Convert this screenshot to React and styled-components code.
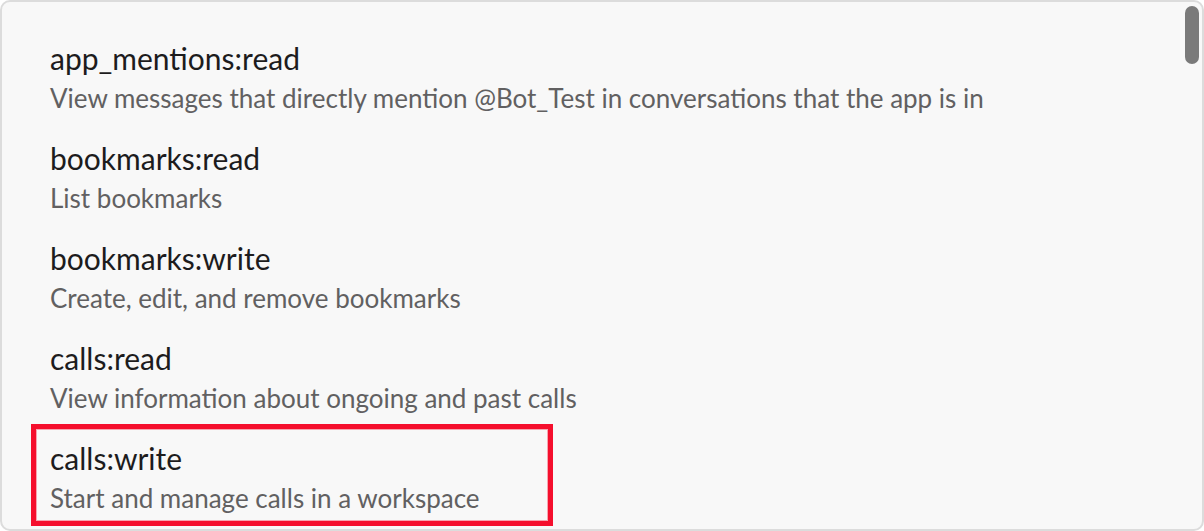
import React from 'react'
import styled, { createGlobalStyle } from 'styled-components'

const GlobalStyle = createGlobalStyle`
    html, body {
        margin: 0;
        padding: 0;
        background: #ffffff;
    }
    body {
        font-family: Lato, "Noto Sans", sans-serif;
    }
`;

const scopes = [
    { name: 'app_mentions:read', text: 'View messages that directly mention @Bot_Test in conversations that the app is in' },
    { name: 'bookmarks:read', text: 'List bookmarks' },
    { name: 'bookmarks:write', text: 'Create, edit, and remove bookmarks' },
    { name: 'calls:read', text: 'View information about ongoing and past calls' },
    { name: 'calls:write', text: 'Start and manage calls in a workspace', highlight: true },
];

function App() {
    return (
        <>
            <GlobalStyle />
            <Card>
                <ScopeList>
                    {scopes.map((s) => (
                        <Scope key={s.name} $highlight={s.highlight}>
                            <ScopeName>{s.name}</ScopeName>
                            <ScopeText>{s.text}</ScopeText>
                        </Scope>
                    ))}
                </ScopeList>
                <Thumb />
            </Card>
        </>
    )
}

const Card = styled.div`
    position: relative;
    box-sizing: border-box;
    width: 1204px;
    height: 531px;
    overflow: hidden;
    background: #f8f8f8;
    border: 2px solid #dcdcdc;
    border-radius: 10px;
    padding: 36px 0 0 48px;
`;

const ScopeList = styled.div`
    display: flex;
    flex-direction: column;
    gap: 20px;
`;

const Scope = styled.div`
    position: relative;
    display: flex;
    flex-direction: column;

    ${({ $highlight }) => $highlight && `
        &::after {
            content: '';
            position: absolute;
            left: -19px;
            top: -14px;
            width: 522px;
            height: 102px;
            box-sizing: border-box;
            border: 5px solid #f50f2d;
            box-shadow: inset 0 0 0 1px #f7a5b0;
        }
    `}
`;

const ScopeName = styled.div`
    font-size: 30px;
    line-height: 40px;
    color: #1d1c1d;
`;

const ScopeText = styled.div`
    font-size: 26px;
    line-height: 40px;
    color: #616061;
`;

const Thumb = styled.div`
    position: absolute;
    top: 4px;
    right: 3px;
    width: 14px;
    height: 58px;
    border-radius: 7px;
    background: #7a7a7a;
`;

export default App
